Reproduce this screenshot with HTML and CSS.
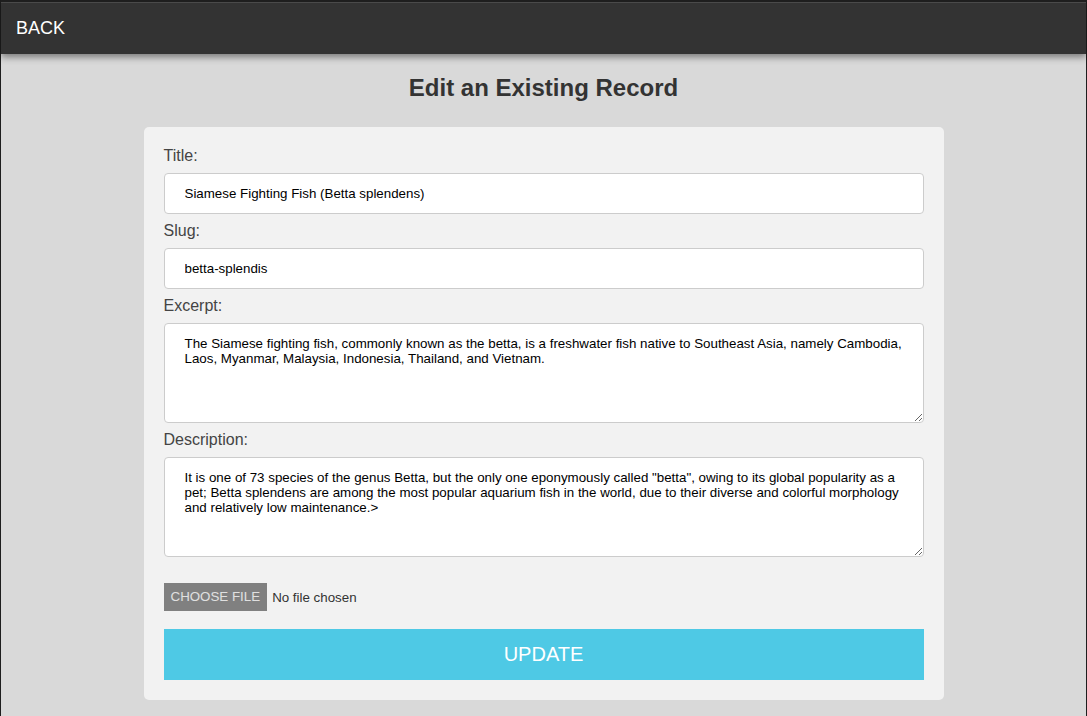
FILE: index.html
```html
<!DOCTYPE html>
<html lang="en">
<head>
<meta charset="utf-8">
<title>Edit an Existing Record</title>
<link rel="stylesheet" href="styles.css">
</head>
<body>
<div class="frame">
  <header class="topbar">
    <a class="back" href="#">BACK</a>
  </header>
  <main class="content">
    <h2 class="heading">Edit an Existing Record</h2>
    <form class="card">
      <label class="label" for="title">Title:</label>
      <input class="field" id="title" type="text" value="Siamese Fighting Fish (Betta splendens)">
      <label class="label" for="slug">Slug:</label>
      <input class="field" id="slug" type="text" value="betta-splendis">
      <label class="label" for="excerpt">Excerpt:</label>
      <textarea class="field area" id="excerpt">The Siamese fighting fish, commonly known as the betta, is a freshwater fish native to Southeast Asia, namely Cambodia, Laos, Myanmar, Malaysia, Indonesia, Thailand, and Vietnam.</textarea>
      <label class="label" for="desc">Description:</label>
      <textarea class="field area" id="desc">It is one of 73 species of the genus Betta, but the only one eponymously called "betta", owing to its global popularity as a pet; Betta splendens are among the most popular aquarium fish in the world, due to their diverse and colorful morphology and relatively low maintenance.&gt;</textarea>
      <div class="file-row">
        <span class="file-btn">CHOOSE FILE</span>
        <span class="file-name">No file chosen</span>
      </div>
      <button class="update" type="button">UPDATE</button>
    </form>
  </main>
</div>
</body>
</html>
```
FILE: styles.css
```css
html, body {
  margin: 0;
  padding: 0;
  height: 100%;
}
body {
  background: #1e1e1e;
  font-family: "Liberation Sans", Arial, sans-serif;
}
.frame {
  min-height: 100%;
  background: #d9d9d9;
  border-left: 1px solid #1e1e1e;
  border-right: 1px solid #1e1e1e;
  box-sizing: border-box;
}
.topbar {
  height: 54px;
  box-sizing: border-box;
  background: #333333;
  border-top: 2px solid #1e1e1e;
  box-shadow: inset 0 1px 0 #4a4a4a, 0 3px 7px rgba(0, 0, 0, 0.45);
  display: flex;
  align-items: center;
  padding-left: 15px;
  position: relative;
}
.back {
  color: #ffffff;
  text-decoration: none;
  font-size: 18px;
  margin-top: 1px;
}
.content {
  display: flex;
  flex-direction: column;
  align-items: center;
}
.heading {
  margin: 20px 0 0;
  font-size: 24px;
  line-height: 28px;
  font-weight: bold;
  color: #333333;
}
.card {
  width: 800px;
  box-sizing: border-box;
  margin-top: 25px;
  background: #f2f2f2;
  border-radius: 5px;
  padding: 20px;
  display: flex;
  flex-direction: column;
}
.label {
  font-size: 16px;
  line-height: 18px;
  color: #444444;
}
.field {
  margin: 8px 0 8px;
  height: 41px;
  box-sizing: border-box;
  border: 1px solid #cccccc;
  border-radius: 4px;
  background: #ffffff;
  padding: 0 20px;
  font-family: "Liberation Sans", Arial, sans-serif;
  font-size: 13.333px;
  color: #000000;
  outline: none;
}
.area {
  height: 100px;
  padding: 12px 20px;
  line-height: 15px;
  resize: vertical;
}
.file-row {
  margin-top: 18px;
  display: flex;
  align-items: center;
}
.file-btn {
  background: #808080;
  color: #e0e0e0;
  font-size: 13.333px;
  height: 28px;
  line-height: 28px;
  padding: 0 7px;
}
.file-name {
  font-size: 13.333px;
  color: #333333;
  margin-left: 5px;
}
.update {
  margin-top: 18px;
  height: 51px;
  border: none;
  background: #4ec9e5;
  color: #ffffff;
  font-family: "Liberation Sans", Arial, sans-serif;
  font-size: 20px;
  cursor: pointer;
}
```
